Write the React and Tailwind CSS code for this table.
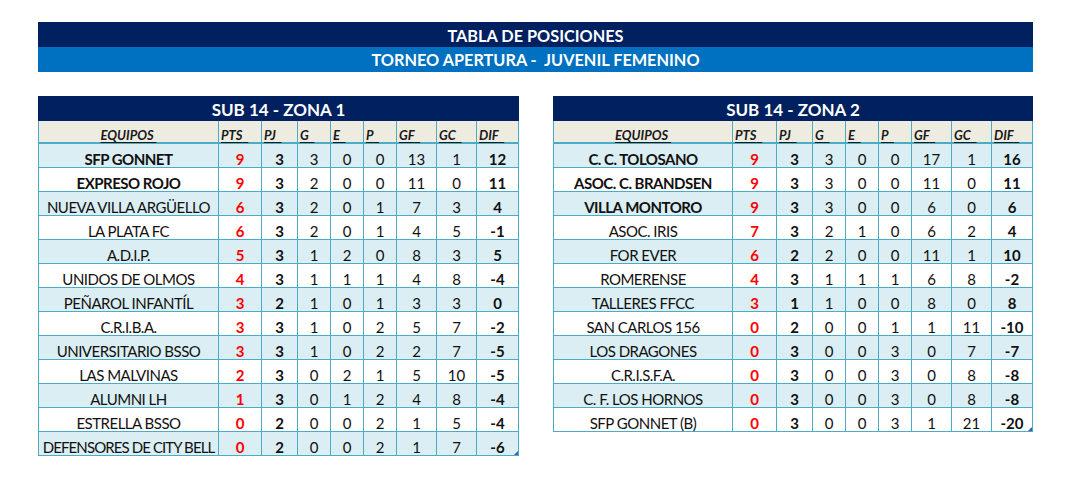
import React from "react";

const zona1 = [
  ["SFP GONNET", 9, 3, 3, 0, 0, 13, 1, 12, true],
  ["EXPRESO ROJO", 9, 3, 2, 0, 0, 11, 0, 11, true],
  ["NUEVA VILLA ARGÜELLO", 6, 3, 2, 0, 1, 7, 3, 4],
  ["LA PLATA FC", 6, 3, 2, 0, 1, 4, 5, -1],
  ["A.D.I.P.", 5, 3, 1, 2, 0, 8, 3, 5],
  ["UNIDOS DE OLMOS", 4, 3, 1, 1, 1, 4, 8, -4],
  ["PEÑAROL INFANTÍL", 3, 2, 1, 0, 1, 3, 3, 0],
  ["C.R.I.B.A.", 3, 3, 1, 0, 2, 5, 7, -2],
  ["UNIVERSITARIO BSSO", 3, 3, 1, 0, 2, 2, 7, -5],
  ["LAS MALVINAS", 2, 3, 0, 2, 1, 5, 10, -5],
  ["ALUMNI LH", 1, 3, 0, 1, 2, 4, 8, -4],
  ["ESTRELLA BSSO", 0, 2, 0, 0, 2, 1, 5, -4],
  ["DEFENSORES DE CITY BELL", 0, 2, 0, 0, 2, 1, 7, -6],
];

const zona2 = [
  ["C. C. TOLOSANO", 9, 3, 3, 0, 0, 17, 1, 16, true],
  ["ASOC. C. BRANDSEN", 9, 3, 3, 0, 0, 11, 0, 11, true],
  ["VILLA MONTORO", 9, 3, 3, 0, 0, 6, 0, 6, true],
  ["ASOC. IRIS", 7, 3, 2, 1, 0, 6, 2, 4],
  ["FOR EVER", 6, 2, 2, 0, 0, 11, 1, 10],
  ["ROMERENSE", 4, 3, 1, 1, 1, 6, 8, -2],
  ["TALLERES FFCC", 3, 1, 1, 0, 0, 8, 0, 8],
  ["SAN CARLOS 156", 0, 2, 0, 0, 1, 1, 11, -10],
  ["LOS DRAGONES", 0, 3, 0, 0, 3, 0, 7, -7],
  ["C.R.I.S.F.A.", 0, 3, 0, 0, 3, 0, 8, -8],
  ["C. F. LOS HORNOS", 0, 3, 0, 0, 3, 0, 8, -8],
  ["SFP GONNET (B)", 0, 3, 0, 0, 3, 1, 21, -20],
];

const heads = ["PTS", "PJ", "G", "E", "P", "GF", "GC", "DIF"];

function Table({ title, rows, cols, width }) {
  return (
    <div className={width}>
      <div className="h-[25px] bg-[#002060] text-white font-bold text-[17px] leading-[25px] text-center pt-[1px]">
        {title}
      </div>
      <div className={`relative grid ${cols} border-l border-[#4BACC6]`}>
        <div className="h-[23px] bg-[#EEECE1] border-r border-b-2 border-[#4BACC6] flex items-end justify-center leading-[14px]">
          <span className="text-[13px] font-bold italic underline underline-offset-[2px] decoration-1 text-[#1a1a1a]">
            EQUIPOS&nbsp;
          </span>
        </div>
        {heads.map((h) => (
          <div
            key={h}
            className="h-[23px] bg-[#EEECE1] border-r border-b-2 border-[#4BACC6] flex items-end pl-[2px] leading-[14px]"
          >
            <span className="text-[13px] font-bold italic underline underline-offset-[2px] decoration-1 text-[#1a1a1a]">
              {h}&nbsp;&nbsp;
            </span>
          </div>
        ))}
        {rows.map((r, i) => {
          const bg = i % 2 === 0 ? "bg-[#DAEEF3]" : "bg-white";
          const cell = `h-[24px] ${bg} border-r border-b border-[#4BACC6] flex items-end justify-center leading-[15px] text-[15px] text-[#111]`;
          const track = r[0].length > 20 ? "tracking-[-0.9px]" : "tracking-[-0.5px]";
          return (
            <React.Fragment key={r[0]}>
              <div className={`${cell} whitespace-nowrap ${track} ${r[9] ? "font-bold" : ""}`}>{r[0]}</div>
              <div className={`${cell} font-bold text-[#FF0000]`}>{r[1]}</div>
              <div className={`${cell} font-bold`}>{r[2]}</div>
              <div className={cell}>{r[3]}</div>
              <div className={cell}>{r[4]}</div>
              <div className={cell}>{r[5]}</div>
              <div className={cell}>{r[6]}</div>
              <div className={cell}>{r[7]}</div>
              <div className={`${cell} font-bold`}>{r[8]}</div>
            </React.Fragment>
          );
        })}
        <div className="absolute right-[1px] bottom-[1px] w-0 h-0 border-l-[4px] border-l-transparent border-b-[4px] border-b-[#3b5bb5]" />
      </div>
    </div>
  );
}

export default function App() {
  return (
    <div
      className="w-[1076px] h-[483px] bg-white pt-[22px] pl-[38px]"
      style={{ fontFamily: "Lato, 'Open Sans', sans-serif" }}
    >
      <div className="w-[995px]">
        <div className="h-[25px] bg-[#002060] text-white font-bold text-[16.3px] leading-[25px] text-center pt-[1px]">
          TABLA DE POSICIONES
        </div>
        <div className="h-[25px] bg-[#0070C0] text-white font-bold text-[16.3px] leading-[25px] text-center whitespace-pre">
          TORNEO APERTURA -  JUVENIL FEMENINO
        </div>
      </div>
      <div className="flex gap-[34px] mt-[24px] items-start">
        <Table
          title="SUB 14 - ZONA 1"
          rows={zona1}
          width="w-[481px]"
          cols="grid-cols-[180px_43px_36px_33px_33px_33px_40px_40px_42px]"
        />
        <Table
          title="SUB 14 - ZONA 2"
          rows={zona2}
          width="w-[480px]"
          cols="grid-cols-[179px_44px_36px_33px_33px_33px_40px_40px_41px]"
        />
      </div>
    </div>
  );
}
